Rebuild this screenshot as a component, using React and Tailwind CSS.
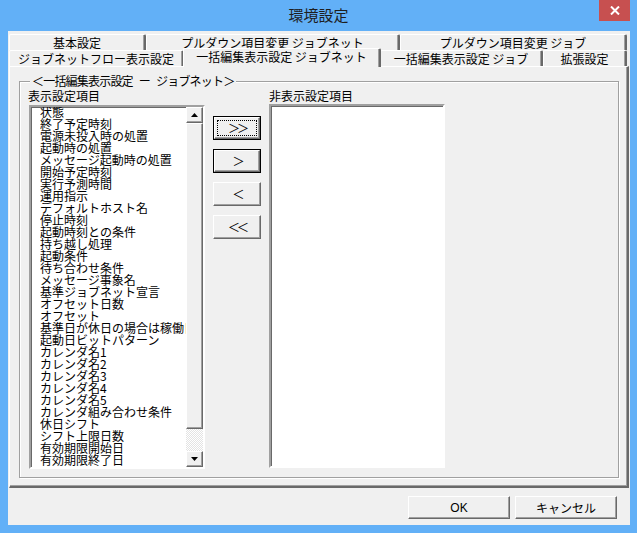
import React from 'react';

const ITEMS = [
  '状態', '終了予定時刻', '電源未投入時の処置', '起動時の処置', 'メッセージ起動時の処置',
  '開始予定時刻', '実行予測時間', '運用指示', 'デフォルトホスト名', '停止時刻',
  '起動時刻との条件', '持ち越し処理', '起動条件', '待ち合わせ条件', 'メッセージ事象名',
  '基準ジョブネット宣言', 'オフセット日数', 'オフセット', '基準日が休日の場合は稼働日', '起動日ビットパターン',
  'カレンダ名1', 'カレンダ名2', 'カレンダ名3', 'カレンダ名4', 'カレンダ名5',
  'カレンダ組み合わせ条件', '休日シフト', 'シフト上限日数', '有効期限開始日', '有効期限終了日',
];

// raised 3D edge, classic Windows look
const raised =
  'border border-t-white border-l-white border-r-[#696969] border-b-[#696969] shadow-[inset_-1px_-1px_0_#a0a0a0] bg-[#f0f0f0]';

const Tab = ({ label, w, active }) => (
  <div
    className={`${w} flex items-center justify-center border-t border-l border-t-white border-l-white border-r-2 border-r-[#696969] shadow-[inset_-1px_0_0_#a0a0a0] rounded-t-[2px] bg-[#f0f0f0] ${
      active ? 'relative z-10 h-[19px] -mb-px -mx-[1px] pb-[2px]' : 'h-[16px]'
    }`}
  >
    <span className="text-[12px] leading-[12px] whitespace-nowrap">{label}</span>
  </div>
);

const Arrow = ({ down }) => (
  <svg width="7" height="4" viewBox="0 0 7 4">
    {down ? <polygon points="0,0 7,0 3.5,4" fill="#000" /> : <polygon points="0,4 7,4 3.5,0" fill="#000" />}
  </svg>
);

const ListBox = ({ children, w }) => (
  <div className={`${w} h-[364px] border-2 border-t-[#a0a0a0] border-l-[#a0a0a0] border-r-white border-b-white shadow-[inset_1px_1px_0_#696969] bg-white flex overflow-hidden`}>
    {children}
  </div>
);

const Chevrons = ({ text }) => (
  <span className="text-[12px] leading-[12px] tracking-[-3px] pr-[3px] -mr-[3px]">{text}</span>
);

const MoveButton = ({ label, variant }) => {
  if (variant === 'focus') {
    return (
      <div className="w-[48px] h-[24px] border border-black flex">
        <div className={`${raised} flex-1 flex p-[2px]`}>
          <div className="flex-1 border border-dotted border-black flex items-center justify-center">
            <Chevrons text={label} />
          </div>
        </div>
      </div>
    );
  }
  if (variant === 'default') {
    return (
      <div className="w-[48px] h-[24px] border border-black flex">
        <div className={`${raised} flex-1 flex items-center justify-center`}>
          <Chevrons text={label} />
        </div>
      </div>
    );
  }
  return (
    <div className={`${raised} w-[48px] h-[24px] flex items-center justify-center`}>
      <Chevrons text={label} />
    </div>
  );
};

export default function App() {
  return (
    <div className="w-[637px] h-[533px] bg-[#62b0f7] flex flex-col font-['Noto_Sans_CJK_JP',sans-serif] text-black select-none">
      {/* Title bar */}
      <div className="relative h-[31px] flex items-center justify-center">
        <span className="text-[15px] leading-[15px] text-[#1e1e1e] pb-[2px]">環境設定</span>
        <div className="absolute top-0 right-[7px] w-[31px] h-[21px] bg-[#c75050] flex items-center justify-center">
          <svg width="10" height="9" viewBox="0 0 10 9">
            <path d="M1 0.5 L9 8.5 M9 0.5 L1 8.5" stroke="#fff" strokeWidth="2" />
          </svg>
        </div>
      </div>

      {/* Client area */}
      <div className="ml-[8px] mr-[7px] h-[494px] bg-[#f0f0f0] flex flex-col">
        {/* Tab control */}
        <div className="ml-[1px] mr-[1px] mt-[3px] flex flex-col">
          <div className="flex h-[16px]">
            <Tab label="基本設定" w="w-[137px]" />
            <Tab label="プルダウン項目変更 ジョブネット" w="w-[254px]" />
            <Tab label="プルダウン項目変更 ジョブ" w="w-[227px]" />
          </div>
          <div className="flex items-end h-[16px]">
            <Tab label="ジョブネットフロー表示設定" w="w-[175px]" />
            <Tab label="一括編集表示設定 ジョブネット" w="w-[198px]" active />
            <Tab label="一括編集表示設定 ジョブ" w="w-[163px]" />
            <Tab label="拡張設定" w="w-[84px]" />
          </div>

          {/* Panel */}
          <div className="h-[422px] border-t border-l border-t-white border-l-white border-r-2 border-b-2 border-r-[#696969] border-b-[#696969] shadow-[inset_-1px_-1px_0_#a0a0a0] flex flex-col">
            {/* Group box */}
            <div className="relative mt-[14px] ml-[9px] w-[600px] h-[397px] border border-[#a0a0a0] shadow-[inset_1px_1px_0_#fff,1px_1px_0_#fff]">
              <span className="absolute -top-[8px] left-[10px] px-[2px] bg-[#f0f0f0] text-[12px] leading-[14px] whitespace-nowrap tracking-[-0.8px]">
                ＜一括編集表示設定<span className="mx-[6px]">ー</span>ジョブネット＞
              </span>

              <div className="flex pl-[9px] pt-[8px]">
                {/* Visible items */}
                <div className="flex flex-col">
                  <div className="h-[15px] text-[12px] leading-[12px] -ml-[1px]">表示設定項目</div>
                  <ListBox w="w-[176px]">
                    <div className="flex-1 pl-[9px] -mt-[1px] overflow-hidden">
                      {ITEMS.map((it) => (
                        <div key={it} className="text-[12px] leading-[12px] h-[12px] whitespace-nowrap overflow-hidden">
                          {it}
                        </div>
                      ))}
                    </div>
                    {/* Scrollbar */}
                    <div className="w-[17px] flex flex-col">
                      <div className={`${raised} h-[16px] flex items-center justify-center`}>
                        <Arrow />
                      </div>
                      <div className={`${raised} h-[306px]`} />
                      <div className="flex-1 bg-[repeating-conic-gradient(#ffffff_0%_25%,#e3e3e3_0%_50%)] bg-[length:2px_2px]" />
                      <div className={`${raised} h-[16px] flex items-center justify-center`}>
                        <Arrow down />
                      </div>
                    </div>
                  </ListBox>
                </div>

                {/* Move buttons */}
                <div className="ml-[8px] mt-[26px] flex flex-col gap-[9px]">
                  <MoveButton label="＞＞" variant="focus" />
                  <MoveButton label="＞" variant="default" />
                  <MoveButton label="＜" />
                  <MoveButton label="＜＜" />
                </div>

                {/* Hidden items */}
                <div className="ml-[8px] flex flex-col">
                  <div className="h-[14px] text-[12px] leading-[12px]">非表示設定項目</div>
                  <ListBox w="w-[176px]">
                    <div className="flex-1" />
                  </ListBox>
                </div>
              </div>
            </div>
          </div>
        </div>

        {/* Dialog buttons */}
        <div className="mt-[8px] flex justify-end gap-[5px] pr-[13px]">
          <div className={`${raised} w-[102px] h-[23px] flex items-center justify-center text-[12px] leading-[12px] font-['Liberation_Sans','Noto_Sans_CJK_JP',sans-serif]`}>
            OK
          </div>
          <div className={`${raised} w-[102px] h-[23px] flex items-center justify-center text-[12px] leading-[12px]`}>
            キャンセル
          </div>
        </div>
      </div>
    </div>
  );
}
